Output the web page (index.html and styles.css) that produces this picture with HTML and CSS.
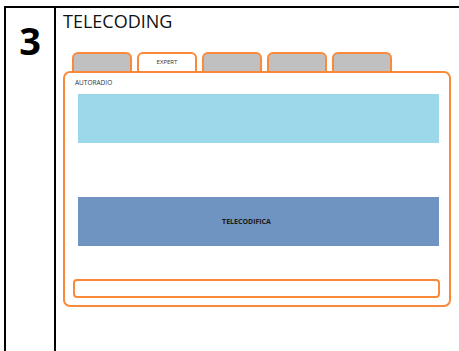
FILE: index.html
```html
<!DOCTYPE html>
<html lang="it">
<head>
    <meta charset="UTF-8">
    <meta name="viewport" content="width=device-width, initial-scale=1.0">
    <title>Telecoding</title>
    <link rel="stylesheet" href="styles.css">
</head>
<body>
    <div class="sheet">
        <div class="step">3</div>
        <div class="content">
            <h2 class="title">TELECODING</h2>
            <div class="frame">
                <div class="tabs">
                    <div class="tab"></div>
                    <div class="tab active">EXPERT</div>
                    <div class="tab"></div>
                    <div class="tab"></div>
                    <div class="tab"></div>
                </div>
                <div class="panel">
                    <div class="panel-label">AUTORADIO</div>
                    <div class="screen light"></div>
                    <div class="screen dark">TELECODIFICA</div>
                    <div class="field"></div>
                </div>
            </div>
        </div>
    </div>
</body>
</html>
```

FILE: styles.css
```css
body {
    margin: 0;
    font-family: "Open Sans", "Liberation Sans", sans-serif;
    background: #fff;
}
.sheet {
    margin: 6px 0 0 4px;
    height: 343px;
    border-top: 2px solid #000;
    border-left: 2px solid #000;
    display: flex;
}
.step {
    width: 48px;
    border-right: 2px solid #000;
    padding-top: 13px;
    font-size: 38px;
    line-height: 38px;
    font-weight: bold;
    text-align: center;
}
.content {
    flex: 1;
    padding: 1px 0 0 7px;
}
.title {
    margin: 0;
    font-size: 18px;
    line-height: 24px;
    font-weight: normal;
    color: #111;
}
.frame {
    margin-top: 19px;
    width: 388px;
}
.tabs {
    display: flex;
    gap: 5px;
    margin-left: 9px;
}
.tab {
    width: 56px;
    height: 17px;
    background-color: #c0c0c0;
    border: 2px solid #f98a3c;
    border-bottom: none;
    border-radius: 6px 6px 0 0;
    font-size: 6px;
    line-height: 17px;
    text-align: center;
    color: #333;
}
.tab.active {
    background-color: #fff;
}
.panel {
    height: 232px;
    border: 2px solid #f98a3c;
    border-radius: 7px;
    display: flex;
    flex-direction: column;
}
.panel-label {
    margin: 5px 0 0 10px;
    height: 9px;
    font-size: 6.5px;
    line-height: 9px;
    color: #333;
}
.screen {
    margin: 7px 10px 0 13px;
    height: 49px;
}
.light {
    background-color: #9bd9ea;
}
.dark {
    margin-top: 54px;
    background-color: #7094c1;
    font-size: 7px;
    font-weight: bold;
    line-height: 49px;
    text-align: center;
    color: #1a1a1a;
    padding-right: 24px;
}
.field {
    margin: 33px 9px 0 8px;
    height: 15px;
    border: 2px solid #f98a3c;
    border-radius: 4px;
}
```
